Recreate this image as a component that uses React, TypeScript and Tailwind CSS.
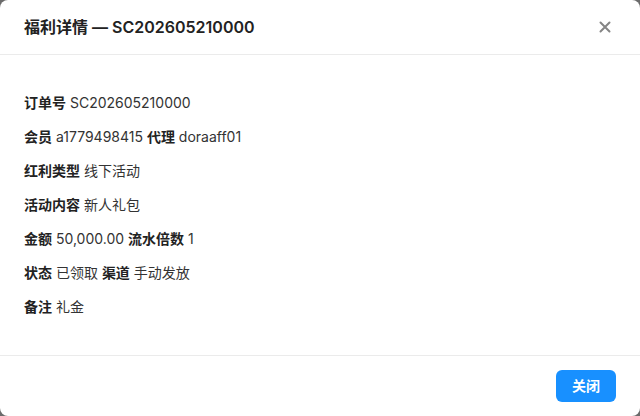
const rows: { label: string; value: string }[][] = [
  [{ label: "订单号", value: "SC202605210000" }],
  [
    { label: "会员", value: "a1779498415" },
    { label: "代理", value: "doraaff01" },
  ],
  [{ label: "红利类型", value: "线下活动" }],
  [{ label: "活动内容", value: "新人礼包" }],
  [
    { label: "金额", value: "50,000.00" },
    { label: "流水倍数", value: "1" },
  ],
  [
    { label: "状态", value: "已领取" },
    { label: "渠道", value: "手动发放" },
  ],
  [{ label: "备注", value: "礼金" }],
];

function App() {
  return (
    <div
      className="h-[416px] w-[640px] bg-[#6b6b6b]"
      style={{ fontFamily: '"Inter", "Noto Sans CJK SC", sans-serif' }}
    >
      <div className="flex h-full w-full flex-col overflow-hidden rounded-lg bg-white">
        <div className="flex h-[55px] shrink-0 items-center justify-between border-b border-[#ebebeb] pl-6 pr-[29px]">
          <h2 className="text-base font-semibold text-[#222]">
            福利详情 — SC202605210000
          </h2>
          <button type="button" className="text-[#858585]">
            <svg width="12" height="12" viewBox="0 0 12 12" fill="none">
              <path
                d="M1.5 1.5l9 9M10.5 1.5l-9 9"
                stroke="currentColor"
                strokeWidth="2"
                strokeLinecap="round"
              />
            </svg>
          </button>
        </div>

        <div className="flex flex-1 flex-col gap-[14px] px-6 pt-[38px] text-sm text-[#333]">
          {rows.map((row, i) => (
            <p key={i} className="leading-5">
              {row.map((item, j) => (
                <span key={j}>
                  {j > 0 && " "}
                  <b className="font-bold text-[#222]">{item.label}</b>{" "}
                  {item.value}
                </span>
              ))}
            </p>
          ))}
        </div>

        <div className="flex h-[61px] shrink-0 items-center justify-end border-t border-[#ebebeb] px-6">
          <button
            type="button"
            className="h-8 w-[60px] rounded-md bg-[#1890ff] text-sm font-semibold text-white"
          >
            关闭
          </button>
        </div>
      </div>
    </div>
  );
}

export default App;
